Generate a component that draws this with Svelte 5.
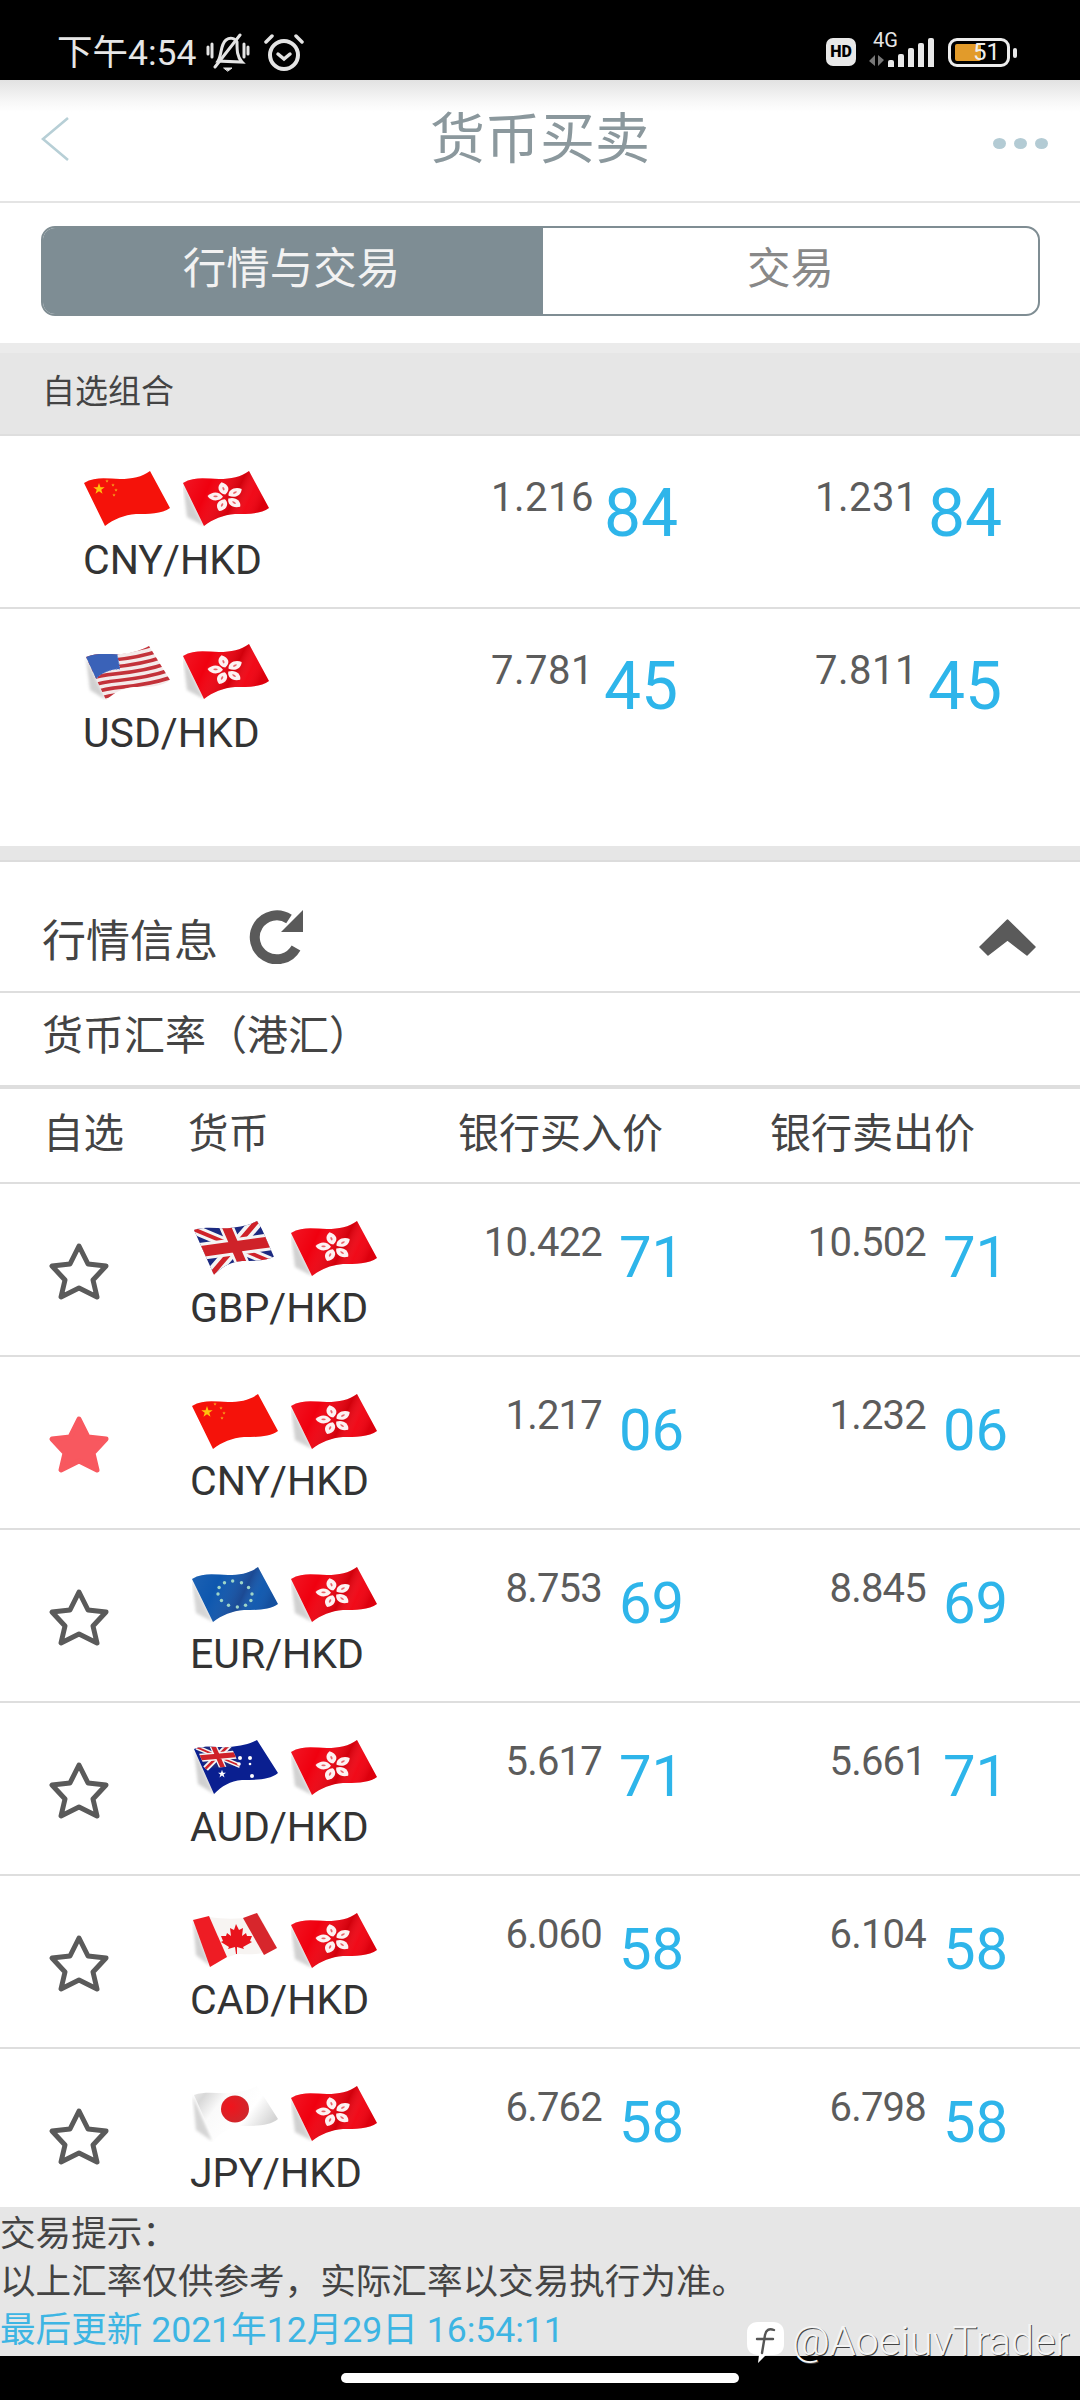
<script>
  const favourites = [
    { flag: 'cn', pair: 'CNY/HKD', bid: '1.216', bidPip: '84', ask: '1.231', askPip: '84' },
    { flag: 'us', pair: 'USD/HKD', bid: '7.781', bidPip: '45', ask: '7.811', askPip: '45' }
  ];
  const quotes = [
    { flag: 'gb', pair: 'GBP/HKD', bid: '10.422', bidPip: '71', ask: '10.502', askPip: '71' },
    { flag: 'cn', pair: 'CNY/HKD', bid: '1.217', bidPip: '06', ask: '1.232', askPip: '06', starred: true },
    { flag: 'eu', pair: 'EUR/HKD', bid: '8.753', bidPip: '69', ask: '8.845', askPip: '69' },
    { flag: 'au', pair: 'AUD/HKD', bid: '5.617', bidPip: '71', ask: '5.661', askPip: '71' },
    { flag: 'ca', pair: 'CAD/HKD', bid: '6.060', bidPip: '58', ask: '6.104', askPip: '58' },
    { flag: 'jp', pair: 'JPY/HKD', bid: '6.762', bidPip: '58', ask: '6.798', askPip: '58' }
  ];
  const euStars = Array.from({ length: 12 }, (_, i) => {
    const a = (i * Math.PI) / 6;
    return { x: 43 + 17 * Math.cos(a) + 0.18 * 13 * Math.sin(a), y: 27 + 13 * Math.sin(a) };
  });
  const stripes = [0, 1, 2, 3, 4, 5, 6];
  const signal = [
    { h: 7 }, { h: 13 }, { h: 19 }, { h: 24 }, { h: 29 }
  ];
</script>

{#snippet flagIcon(code)}
  <svg class="flag" viewBox="0 0 86 56"><use href="#flag-{code}" /></svg>
{/snippet}

{#snippet pairCell(code, pair)}
  <div class="pair">
    <div class="flags">
      {@render flagIcon(code)}
      {@render flagIcon('hk')}
    </div>
    <div class="pair-name">{pair}</div>
  </div>
{/snippet}

{#snippet price(base, pip)}
  <div class="price">
    <span class="base">{base}</span>
    <span class="pip">{pip}</span>
  </div>
{/snippet}

<!-- shared flag artwork, referenced by every row -->
<svg class="defs" width="0" height="0" aria-hidden="true">
  <defs>
    <clipPath id="wave"><path d="M0 12C12 5 24 8 36 8C48 8 58 6 66 0L86 37C78 43 64 43 52 43C40 44 30 48 21 55Z" /></clipPath>
    <clipPath id="flat"><path d="M2 9C14 5 26 8 38 7C48 6 58 4 65 0L86 33C78 40 64 40 50 40C38 41 30 46 22 54Z" /></clipPath>
    <clipPath id="tall"><path d="M2 13C14 8 26 11 38 10C48 9 58 6 65 2L86 36C78 43 64 43 50 43C38 44 30 49 22 56Z" /></clipPath>
    <linearGradient id="sheen" x1="0" y1="0" x2="1" y2="0.3">
      <stop offset="0" stop-color="#fff" stop-opacity=".1" />
      <stop offset=".35" stop-color="#fff" stop-opacity="0" />
      <stop offset=".68" stop-color="#600" stop-opacity=".22" />
      <stop offset=".85" stop-color="#fff" stop-opacity=".04" />
      <stop offset="1" stop-color="#500" stop-opacity=".12" />
    </linearGradient>
    <linearGradient id="paper" x1="0" y1="0" x2="1" y2=".5">
      <stop offset="0" stop-color="#f4f4f4" />
      <stop offset=".18" stop-color="#d8d8d8" />
      <stop offset=".38" stop-color="#fafafa" />
      <stop offset=".72" stop-color="#fff" />
      <stop offset="1" stop-color="#d4d4d4" />
    </linearGradient>
    <radialGradient id="sun" cx=".35" cy=".4" r=".8">
      <stop offset="0" stop-color="#f0141c" />
      <stop offset="1" stop-color="#c92b2f" />
    </radialGradient>
    <filter id="soft" x="-20%" y="-20%" width="140%" height="140%"><feGaussianBlur stdDeviation="1.6" /></filter>
    <polygon id="pt" points="0,-1 .24,-.31 .95,-.31 .38,.12 .59,.81 0,.38 -.59,.81 -.38,.12 -.95,-.31 -.24,-.31" />
    <g id="petal">
      <path d="M0-3C-6.5-6-6.5-15 0-18.5C6.5-14 6.5-7 0-3Z" fill="#fdf2f2" />
      <ellipse cx="0" cy="-10.5" rx="1" ry="2.2" fill="#e8636a" />
    </g>
    <g id="union">
      <rect width="100" height="60" fill="#1c2a80" />
      <path d="M0 0L100 60M100 0L0 60" stroke="#f4f4f4" stroke-width="15" />
      <path d="M0 0L100 60M100 0L0 60" stroke="#cf2229" stroke-width="6" />
      <path d="M50 0V60M0 30H100" stroke="#f4f4f4" stroke-width="22" />
      <path d="M50 0V60M0 30H100" stroke="#cf2229" stroke-width="14" />
    </g>

    <symbol id="flag-hk" viewBox="0 0 86 56">
      <path d="M0 12L21 55L4 46Z" fill="#999" opacity=".45" filter="url(#soft)" />
      <g clip-path="url(#wave)">
        <rect width="86" height="56" fill="#f0000f" />
        <rect width="86" height="56" fill="url(#sheen)" />
      </g>
      <g transform="translate(43 26) scale(1 .82) rotate(-14)">
        <use href="#petal" />
        <use href="#petal" transform="rotate(72)" />
        <use href="#petal" transform="rotate(144)" />
        <use href="#petal" transform="rotate(216)" />
        <use href="#petal" transform="rotate(288)" />
      </g>
    </symbol>

    <symbol id="flag-cn" viewBox="0 0 86 56">
      <g clip-path="url(#wave)">
        <rect width="86" height="56" fill="#f5120a" />
      </g>
      <use href="#pt" transform="translate(15 18) scale(6)" fill="#ffc20e" />
      <use href="#pt" transform="translate(23 10) scale(1.8)" fill="#f7a21c" />
      <use href="#pt" transform="translate(29 14) scale(1.8)" fill="#f7a21c" />
      <use href="#pt" transform="translate(32 19) scale(1.8)" fill="#f7a21c" />
      <use href="#pt" transform="translate(30 24) scale(1.8)" fill="#f7a21c" />
    </symbol>

    <symbol id="flag-us" viewBox="0 0 86 56">
      <path d="M2 13L22 56L6 46Z" fill="#999" opacity=".45" filter="url(#soft)" />
      <g clip-path="url(#tall)">
        <rect width="86" height="56" fill="#f4eaea" />
        <g transform="matrix(.64 -.11 .34 .73 2 12)" fill="none" stroke="#c3323a" stroke-width="4.6">
          {#each stripes as s}
            <path d="M-10 {2.4 + s * 9.1}C20 {-3 + s * 9.1} 50 {8 + s * 9.1} 110 {s * 9.1}" />
          {/each}
        </g>
        <path d="M2 13C10 8 20 8 33 9L36 25C26 25 17 29 11 36Z" fill="#3a62b8" />
        <path d="M2 13C10 8 20 8 33 9L36 25C26 25 17 29 11 36Z" fill="none" stroke="#6f90d8" stroke-width="1" stroke-dasharray="1 2" />
      </g>
    </symbol>

    <symbol id="flag-gb" viewBox="0 0 86 56">
      <g clip-path="url(#flat)">
        <g transform="matrix(.65 -.09 .32 .74 1 8)"><use href="#union" /></g>
      </g>
    </symbol>

    <symbol id="flag-eu" viewBox="0 0 86 56">
      <path d="M0 12L21 55L4 46Z" fill="#999" opacity=".4" filter="url(#soft)" />
      <g clip-path="url(#wave)">
        <rect width="86" height="56" fill="#0e57ae" />
        <rect width="86" height="56" fill="url(#sheen)" opacity=".7" />
      </g>
      {#each euStars as star}
        <circle cx={star.x} cy={star.y} r="1.7" fill="#9fd6c8" />
      {/each}
    </symbol>

    <symbol id="flag-au" viewBox="0 0 86 56">
      <path d="M2 9L22 54L6 44Z" fill="#999" opacity=".45" filter="url(#soft)" />
      <g clip-path="url(#flat)">
        <rect width="86" height="56" fill="#0a1f90" />
        <g transform="matrix(.34 -.03 .16 .36 4 7)"><use href="#union" /></g>
      </g>
      <use href="#pt" transform="translate(30 34) scale(4.2)" fill="#fff" />
      <circle cx="48" cy="18" r="2" fill="#fff" />
      <circle cx="58" cy="18" r="2" fill="#fff" />
      <circle cx="47" cy="24" r="1.8" fill="#fff" />
      <circle cx="58" cy="24" r="1.3" fill="#fff" />
      <circle cx="60" cy="36" r="2" fill="#fff" />
    </symbol>

    <symbol id="flag-ca" viewBox="0 0 86 56">
      <path d="M1 6L18 53L4 42Z" fill="#999" opacity=".45" filter="url(#soft)" />
      <path d="M17 4C30 6 42 6 52 5L66 0L85 35C74 41 60 42 48 41C38 42 28 47 18 53Z" fill="#f7f4f2" />
      <path d="M1 7L17 3L35 44L18 54Z" fill="#ee1c24" />
      <path d="M51 5L65 0L85 35L72 42Z" fill="#d7262c" />
      <path d="M44 11L47 17L51 15L50 23L54 20L55 23L60 23L58 28L60 29L51 34L52 36L45 34L45 41L44 41L43 34L36 36L37 34L29 29L31 28L29 23L34 23L35 20L39 23L38 15L42 17Z" fill="#e8131c" />
    </symbol>

    <symbol id="flag-jp" viewBox="0 0 86 56">
      <path d="M1 10L20 55L4 44Z" fill="#aaa" opacity=".5" filter="url(#soft)" />
      <g clip-path="url(#flat)">
        <rect width="86" height="56" fill="url(#paper)" />
      </g>
      <ellipse cx="43" cy="23" rx="14" ry="13.5" fill="url(#sun)" />
    </symbol>
  </defs>
</svg>

<div class="screen">
  <header class="status">
    <span class="clock">下午4:54</span>
    <svg class="bell" viewBox="0 0 44 40" fill="none" stroke="#e4e4e4" stroke-width="3" stroke-linecap="round">
      <path d="M2 14V21M6 11V24M38 11V24M42 14V21" />
      <path d="M12 28C16 22 14 12 20 7C24 4 29 5 31 9C31 17 31 24 36 29Z" />
      <path d="M34 2L9 34" />
      <path d="M18 35H26L22 38Z" fill="#e4e4e4" stroke-width="1" />
    </svg>
    <svg class="alarm" viewBox="0 0 40 38" fill="none" stroke="#e4e4e4" stroke-linecap="round">
      <circle cx="20" cy="21" r="14" stroke-width="4" />
      <path d="M2 8L8 2M38 8L32 2" stroke-width="3.5" />
      <path d="M14 20L20 25L26 20" stroke-width="3.5" />
    </svg>
    <div class="status-right">
      <span class="hd">HD</span>
      <div class="net">
        <span class="net-type">4G</span>
        <svg class="arrows" viewBox="0 0 15 11" fill="#777">
          <path d="M6 0V11L0 6ZM9 11V0L15 5Z" />
        </svg>
      </div>
      <div class="bars">
        {#each signal as bar}
          <i style="height:{bar.h}px"></i>
        {/each}
      </div>
      <div class="battery">
        <div class="cell"><b class="charge"></b><span>51</span></div>
        <i class="tip"></i>
      </div>
    </div>
  </header>

  <nav class="nav">
    <svg class="back" viewBox="0 0 28 44" fill="none" stroke="#b7cfd6" stroke-width="2.6">
      <path d="M27 1L2 22L27 43" />
    </svg>
    <h1>货币买卖</h1>
    <div class="more"><i></i><i></i><i></i></div>
  </nav>

  <div class="tabs-wrap">
    <div class="tabs">
      <div class="tab active">行情与交易</div>
      <div class="tab">交易</div>
    </div>
  </div>

  <div class="group-head">自选组合</div>
  <section class="favourites">
    {#each favourites as row}
      <div class="row fav-row">
        {@render pairCell(row.flag, row.pair)}
        {@render price(row.bid, row.bidPip)}
        {@render price(row.ask, row.askPip)}
      </div>
    {/each}
  </section>
  <div class="band"></div>

  <div class="market-head">
    <span>行情信息</span>
    <svg class="refresh" viewBox="0 0 54 55">
      <path d="M40 10A22 22 0 1 0 47 39" fill="none" stroke="#5a5a5a" stroke-width="10" />
      <polygon points="54,1 54,23 32,23" fill="#5a5a5a" />
    </svg>
    <svg class="collapse" viewBox="0 0 57 37">
      <polygon points="28.5,1 1,28 9,36 28.5,21 48,36 56,28" fill="#5a5a5a" stroke="#5a5a5a" stroke-width="1.5" stroke-linejoin="round" />
    </svg>
  </div>
  <div class="sub-head">货币汇率（港汇）</div>
  <div class="table-head">
    <span>自选</span>
    <span>货币</span>
    <span>银行买入价</span>
    <span>银行卖出价</span>
  </div>

  <section class="quotes">
    {#each quotes as row}
      <div class="row quote-row">
        <svg class="star" class:on={row.starred} viewBox="-3 -3 64 62">
          <polygon points="29,2 38,20 56,22 43,36 47,53 29,44 11,53 15,36 2,22 20,20" />
        </svg>
        {@render pairCell(row.flag, row.pair)}
        {@render price(row.bid, row.bidPip)}
        {@render price(row.ask, row.askPip)}
      </div>
    {/each}
  </section>

  <footer class="notes">
    <p>交易提示：</p>
    <p>以上汇率仅供参考，实际汇率以交易执行为准。</p>
    <p class="updated">最后更新 2021年12月29日 16:54:11</p>
  </footer>

  <div class="home-bar"><i></i></div>

  <div class="watermark">
    <svg viewBox="0 0 37 41">
      <path d="M11 0H26C33 0 37 4 37 11V22C37 29 33 33 26 33H19L11 41L12 33C4 33 0 29 0 22V11C0 4 4 0 11 0Z" fill="#fff" />
      <path d="M27 8C22 6 19 8 18 13L15 31M10 17H26" fill="none" stroke="#555" stroke-width="2.4" stroke-linecap="round" />
    </svg>
    <span>@AoeiuvTrader</span>
  </div>
</div>

<style>
  :global(body) {
    margin: 0;
    background: #fff;
  }

  * {
    box-sizing: border-box;
  }

  .defs {
    position: absolute;
  }

  .screen {
    position: relative;
    display: flex;
    flex-direction: column;
    width: 1080px;
    height: 2400px;
    overflow: hidden;
    background: #fff;
    font-family: Roboto, "Noto Sans CJK SC", sans-serif;
    color: #444;
  }

  /* system status bar */
  .status {
    display: flex;
    align-items: center;
    flex: 0 0 80px;
    padding: 26px 63px 0 57px;
    background: #000;
    color: #e6e6e6;
  }

  .clock {
    font-size: 35.5px;
    line-height: 40px;
  }

  .bell {
    width: 44px;
    height: 40px;
    margin-left: 10px;
  }

  .alarm {
    width: 40px;
    height: 38px;
    margin-left: 14px;
  }

  .status-right {
    display: flex;
    align-items: flex-end;
    margin: -8px 0 0 auto;
  }

  .hd {
    width: 30px;
    height: 28px;
    margin-bottom: 1px;
    border-radius: 7px;
    background: #e8e8e8;
    color: #000;
    font-size: 16px;
    font-weight: 900;
    line-height: 28px;
    text-align: center;
  }

  .net {
    display: flex;
    flex-direction: column;
    align-items: flex-start;
    width: 27px;
    margin: 0 -12px 0 17px;
    position: relative;
  }

  .net-type {
    margin-bottom: 6px;
    font-size: 20px;
    line-height: 18px;
    white-space: nowrap;
  }

  .arrows {
    width: 15px;
    height: 11px;
    margin-left: -4px;
    margin-bottom: 1px;
  }

  .bars {
    display: flex;
    align-items: flex-end;
    gap: 4px;
    margin-right: 14px;
  }

  .bars i {
    width: 6px;
    border-radius: 2px 2px 0 0;
    background: #e8e8e8;
  }

  .battery {
    display: flex;
    align-items: center;
    gap: 3px;
  }

  .cell {
    position: relative;
    width: 62px;
    height: 29px;
    border: 3px solid #ececec;
    border-radius: 9px;
    color: #eee;
    font-size: 24px;
    line-height: 23px;
    text-align: center;
  }

  .cell span {
    position: relative;
    padding-left: 15px;
  }

  .charge {
    position: absolute;
    left: 4px;
    top: 3px;
    width: 26px;
    height: 17px;
    border-radius: 2px;
    background: #e29b2a;
  }

  .tip {
    width: 4px;
    height: 10px;
    border-radius: 2px;
    background: #e8e8e8;
  }

  /* page title */
  .nav {
    display: grid;
    grid-template-columns: 1fr auto 1fr;
    align-items: center;
    flex: 0 0 123px;
    padding: 0 36px 3px;
    border-bottom: 2px solid #e4e4e4;
    background: linear-gradient(#e2e2e2 0, #f8f8f8 22px, #fff 32px);
  }

  .back {
    width: 28px;
    height: 44px;
    margin: 0 0 1px 5px;
  }

  h1 {
    margin: 0;
    color: #8b989d;
    font-size: 55px;
    font-weight: 400;
    line-height: 60px;
  }

  .more {
    display: flex;
    justify-content: flex-end;
    gap: 8px;
    margin-right: -4px;
    padding-top: 8px;
  }

  .more i {
    width: 13px;
    height: 11px;
    border-radius: 50%;
    background: #b3cbd4;
  }

  .tabs-wrap {
    flex: 0 0 140px;
    padding: 23px 40px 0 41px;
  }

  .tabs {
    display: flex;
    height: 90px;
    overflow: hidden;
    border: 2px solid #7f8d93;
    border-radius: 14px;
  }

  .tab {
    flex: 1;
    color: #888;
    font-size: 43.5px;
    line-height: 84px;
    text-align: center;
  }

  .tab.active {
    flex: 0 0 500px;
    padding-right: 3px;
    background: #7e8d94;
    color: #f2f2f2;
  }

  .group-head {
    flex: 0 0 93px;
    padding: 6px 0 0 42px;
    border-bottom: 2px solid #dedede;
    background: linear-gradient(#ebebeb 0, #ebebeb 10px, #e6e6e6 10px);
    color: #444;
    font-size: 33px;
    line-height: 85px;
  }

  /* quote rows */
  .row {
    display: grid;
    height: 173px;
    border-bottom: 2px solid #dedede;
  }

  .favourites {
    flex: 0 0 410px;
  }

  .fav-row {
    grid-template-columns: 440px 324px 324px;
  }

  .fav-row:last-child {
    border-bottom: 0;
  }

  .fav-row .pair {
    padding: 35px 0 0 83px;
  }

  .fav-row .flags {
    margin-left: 1px;
  }

  .fav-row .pair-name {
    margin-top: 9px;
  }

  .fav-row .base {
    width: 154px;
    margin-top: 38px;
    letter-spacing: 0.5px;
  }

  .fav-row .pip {
    margin: 39px 0 0 10px;
    font-size: 66px;
    line-height: 78px;
  }

  .quote-row {
    grid-template-columns: 190px 250px 324px 324px;
  }

  .quote-row .pair {
    padding-top: 37px;
  }

  .quote-row .flags {
    margin-left: 2px;
  }

  .quote-row .pair-name {
    margin-top: 7px;
  }

  .quote-row .base {
    width: 162px;
    margin-top: 35px;
    letter-spacing: -0.8px;
  }

  .quote-row .pip {
    margin: 38px 0 0 17px;
    font-size: 58px;
    line-height: 70px;
  }

  .flags {
    display: flex;
    gap: 13px;
    height: 56px;
  }

  .flag {
    width: 86px;
    height: 56px;
  }

  .pair-name {
    color: #333;
    font-size: 41px;
    line-height: 48px;
  }

  .price {
    display: flex;
    align-items: flex-start;
  }

  .base {
    color: #5c5c5c;
    font-size: 40px;
    line-height: 48px;
    text-align: right;
  }

  .pip {
    color: #2eb5ea;
  }

  .star {
    width: 64px;
    height: 62px;
    margin: 57px 0 0 47px;
    fill: none;
    stroke: #5a5a5a;
    stroke-width: 5;
    stroke-linejoin: round;
  }

  .star.on {
    fill: #f8585f;
    stroke: #f8585f;
  }

  .band {
    flex: 0 0 16px;
    border-bottom: 2px solid #dcdcdc;
    background: #e6e6e6;
  }

  .market-head {
    display: flex;
    align-items: center;
    flex: 0 0 131px;
    padding: 0 44px 0 42px;
    border-bottom: 2px solid #dedede;
    font-size: 44px;
    line-height: 50px;
  }

  .market-head span {
    padding-top: 31px;
  }

  .refresh {
    width: 54px;
    height: 55px;
    margin: 20px 0 0 31px;
  }

  .collapse {
    width: 57px;
    height: 37px;
    margin: 22px 0 0 auto;
  }

  .sub-head {
    flex: 0 0 96px;
    padding-left: 42px;
    border-bottom: 4px solid #dedede;
    font-size: 41px;
    line-height: 86px;
  }

  .table-head {
    display: grid;
    grid-template-columns: 145px 270px 312px 1fr;
    flex: 0 0 95px;
    padding-left: 43px;
    border-bottom: 2px solid #dedede;
    font-size: 40.5px;
    line-height: 90px;
  }

  .table-head span:nth-child(n + 3) {
    font-size: 41px;
  }

  .quotes {
    flex: 0 0 1023px;
    overflow: hidden;
  }

  .notes {
    flex: 0 0 149px;
    padding-top: 3px;
    background: #e6e6e6;
    color: #444;
    font-size: 35.6px;
    line-height: 48px;
  }

  .notes p {
    margin: 0;
  }

  .updated {
    color: #3db5e3;
  }

  .home-bar {
    flex: 1;
    display: flex;
    justify-content: center;
    padding-top: 17px;
    background: #000;
  }

  .home-bar i {
    width: 398px;
    height: 10px;
    border-radius: 5px;
    background: #fff;
  }

  .watermark {
    position: absolute;
    left: 747px;
    top: 2319px;
    display: flex;
    align-items: flex-start;
    gap: 8px;
    color: #f4f4f4;
    font-size: 41.5px;
    font-weight: 300;
    line-height: 44px;
    text-shadow: 1px 1px 0 #444;
    white-space: nowrap;
  }

  .watermark svg {
    width: 37px;
    height: 41px;
    margin-top: 3px;
  }
</style>
